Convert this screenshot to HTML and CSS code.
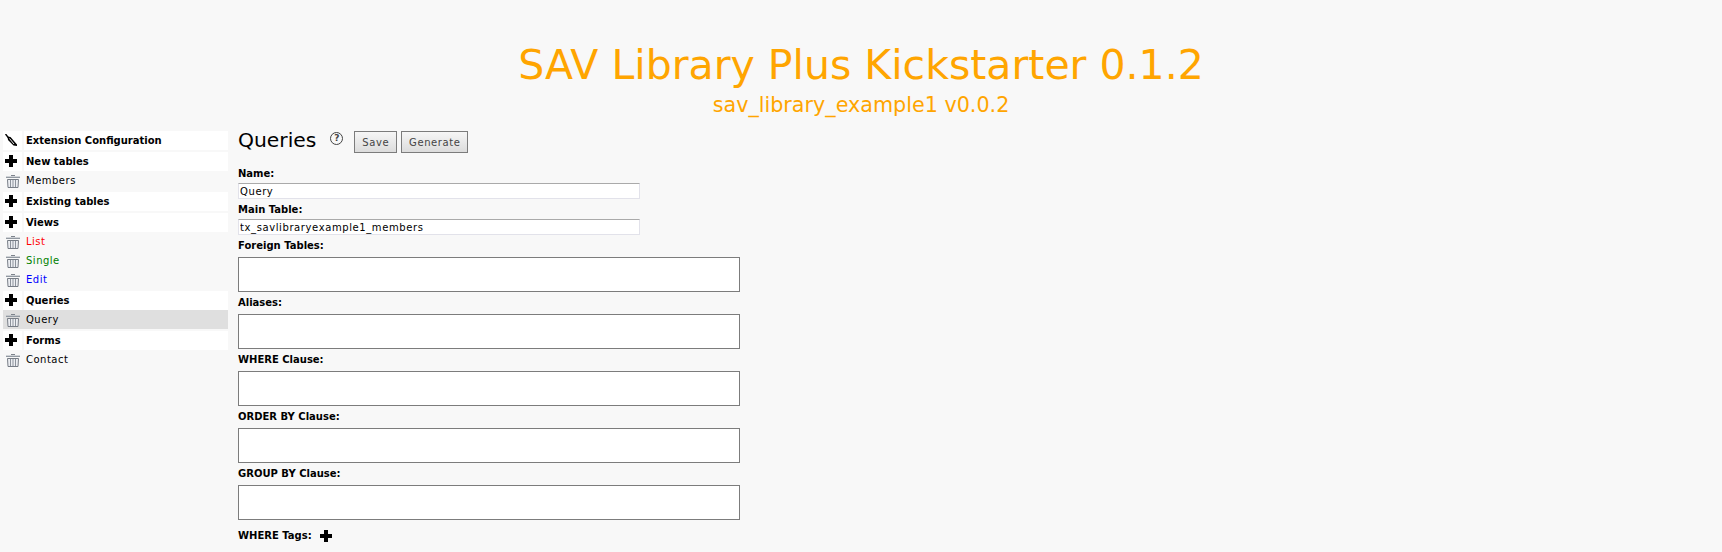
FILE: index.html
```html
<!DOCTYPE html>
<html lang="en">

<head>
    <meta charset="UTF-8">
    <title>SAV Library Plus Kickstarter</title>
    <link rel="stylesheet" href="styles.css">
</head>

<body>
    <svg class="defs" width="0" height="0">
        <symbol id="plus" viewBox="0 0 12 12">
            <path d="M4 0h4v4h4v4H8v4H4V8H0V4h4z" fill="#000" />
        </symbol>
        <symbol id="trash" viewBox="0 0 14 13">
            <path d="M5 .5h4M0 2.5h14" stroke="#7d838c" fill="none" />
            <path d="M0 1.5h14v1H0z" fill="#a9aeb6" />
            <path d="M1.5 4.5h11l-.5 8H2z" fill="#eceef2" stroke="#777d86" />
            <path d="M4.5 5v7M7 5v7M9.5 5v7" stroke="#8d939c" fill="none" />
        </symbol>
    </svg>

    <div class="header">
        <h1>SAV Library Plus Kickstarter 0.1.2</h1>
        <div class="subtitle">sav_library_example1 v0.0.2</div>
    </div>

    <div class="layout">
        <ul class="menu">
            <li class="section">
                <span class="icon">
                    <svg class="plus" viewBox="0 0 12 12">
                        <path d="M.5 0L4 4.5" stroke="#000" stroke-width="1.4" fill="none" />
                        <path d="M2.5 2.5l3 .5 6.5 7.5V12l-3.5-.5L3 6z" fill="#000" />
                        <path d="M4.5 4.5l4.5 5.5" stroke="#fff" stroke-width="0.9" fill="none" />
                    </svg>
                </span>
                <span class="label">Extension Configuration</span>
            </li>
            <li class="section"><span class="icon"><svg class="plus"><use href="#plus" /></svg></span><span class="label">New tables</span></li>
            <li class="item"><span class="icon"><svg class="trash"><use href="#trash" /></svg></span><span class="label">Members</span></li>
            <li class="section"><span class="icon"><svg class="plus"><use href="#plus" /></svg></span><span class="label">Existing tables</span></li>
            <li class="section"><span class="icon"><svg class="plus"><use href="#plus" /></svg></span><span class="label">Views</span></li>
            <li class="item red"><span class="icon"><svg class="trash"><use href="#trash" /></svg></span><span class="label">List</span></li>
            <li class="item green"><span class="icon"><svg class="trash"><use href="#trash" /></svg></span><span class="label">Single</span></li>
            <li class="item blue"><span class="icon"><svg class="trash"><use href="#trash" /></svg></span><span class="label">Edit</span></li>
            <li class="section"><span class="icon"><svg class="plus"><use href="#plus" /></svg></span><span class="label">Queries</span></li>
            <li class="item selected"><span class="icon"><svg class="trash"><use href="#trash" /></svg></span><span class="label">Query</span></li>
            <li class="section"><span class="icon"><svg class="plus"><use href="#plus" /></svg></span><span class="label">Forms</span></li>
            <li class="item"><span class="icon"><svg class="trash"><use href="#trash" /></svg></span><span class="label">Contact</span></li>
        </ul>

        <div class="content">
            <div class="toolbar">
                <h2>Queries</h2>
                <span class="help">?</span>
                <button class="save">Save</button>
                <button class="generate">Generate</button>
            </div>

            <label>Name:</label>
            <input type="text" value="Query">

            <label>Main Table:</label>
            <input type="text" value="tx_savlibraryexample1_members">

            <label>Foreign Tables:</label>
            <textarea></textarea>

            <label>Aliases:</label>
            <textarea></textarea>

            <label>WHERE Clause:</label>
            <textarea></textarea>

            <label>ORDER BY Clause:</label>
            <textarea></textarea>

            <label>GROUP BY Clause:</label>
            <textarea></textarea>

            <div class="tags">
                <label>WHERE Tags:</label>
                <svg class="plus"><use href="#plus" /></svg>
            </div>
        </div>
    </div>
</body>

</html>
```

FILE: styles.css
```css
html,
body {
    height: 552px;
    overflow: hidden;
}

body {
    font-family: "DejaVu Sans", Verdana, sans-serif;
    font-size: 10px;
    background-color: #f8f8f8;
    color: #000;
    margin: 0;
}

.defs {
    display: block;
}

.header {
    text-align: center;
    color: orange;
    padding-top: 41px;
    height: 90px;
}

h1 {
    font-size: 41px;
    font-weight: normal;
    line-height: 48px;
    margin: 0;
}

.subtitle {
    font-size: 20.7px;
    line-height: 24px;
    margin-top: 4px;
}

.layout {
    display: flex;
    align-items: flex-start;
}

.menu {
    list-style: none;
    width: 225px;
    margin: 0 0 0 3px;
    padding: 0;
}

.menu li {
    display: flex;
    height: 19px;
    line-height: 19px;
}

.menu .section {
    font-weight: bold;
    margin-top: 2px;
    gap: 2px;
}

.menu .section:first-child {
    margin-top: 0;
}

.icon {
    width: 19px;
    display: flex;
    align-items: center;
    flex-shrink: 0;
}

.section .icon {
    padding: 0 0 1px 2px;
    width: 17px;
    height: 18px;
}

.item .icon {
    padding: 1px 0 0 3px;
    width: 16px;
    height: 18px;
}

.label {
    flex: 1;
    padding-left: 2px;
}

.section .icon,
.section .label {
    background-color: #fff;
}

.item .label {
    padding-left: 4px;
    letter-spacing: 0.5px;
}

.menu .selected {
    background-color: #dfdfdf;
}

.red {
    color: #f00;
}

.green {
    color: #008000;
}

.blue {
    color: #00f;
}

.plus {
    width: 12px;
    height: 12px;
}

.trash {
    width: 14px;
    height: 13px;
}

.content {
    margin-left: 10px;
}

.toolbar {
    display: flex;
    align-items: center;
    height: 22px;
    margin-bottom: 13px;
}

h2 {
    font-size: 20.3px;
    font-weight: normal;
    margin: 0 0 4px;
}

.help {
    width: 11px;
    height: 11px;
    border: 1px solid #444;
    border-radius: 50%;
    font-size: 9px;
    font-weight: bold;
    line-height: 11px;
    text-align: center;
    color: #444;
    margin: 0 0 8px 14px;
}

button {
    font-family: inherit;
    font-size: 10px;
    letter-spacing: 0.6px;
    height: 22px;
    color: #444;
    background: linear-gradient(#f6f6f6, #dcdcdc);
    border: 1px solid #7c7c7c;
    padding: 0;
}

.save {
    width: 43px;
    margin-left: 11px;
}

.generate {
    width: 67px;
    margin-left: 4px;
}

label {
    display: block;
    font-weight: bold;
    line-height: 15px;
    margin-bottom: 2px;
}

input,
textarea {
    display: block;
    font-family: inherit;
    font-size: 10px;
    box-sizing: border-box;
    background-color: #fff;
    margin: 0;
}

input {
    width: 402px;
    height: 16px;
    line-height: 16px;
    letter-spacing: 0.6px;
    border: 1px solid #e2e2ea;
    border-top-color: #aaa;
    padding: 1px 1px 0;
    margin-bottom: 3px;
}

textarea {
    width: 502px;
    height: 35px;
    border: 1px solid #7c7c7c;
    padding: 1px;
    margin-top: 4px;
    margin-bottom: 3px;
    resize: none;
}

.tags {
    display: flex;
    align-items: center;
    gap: 8px;
    margin-top: 8px;
}

.tags label {
    margin-bottom: 0;
}
```
